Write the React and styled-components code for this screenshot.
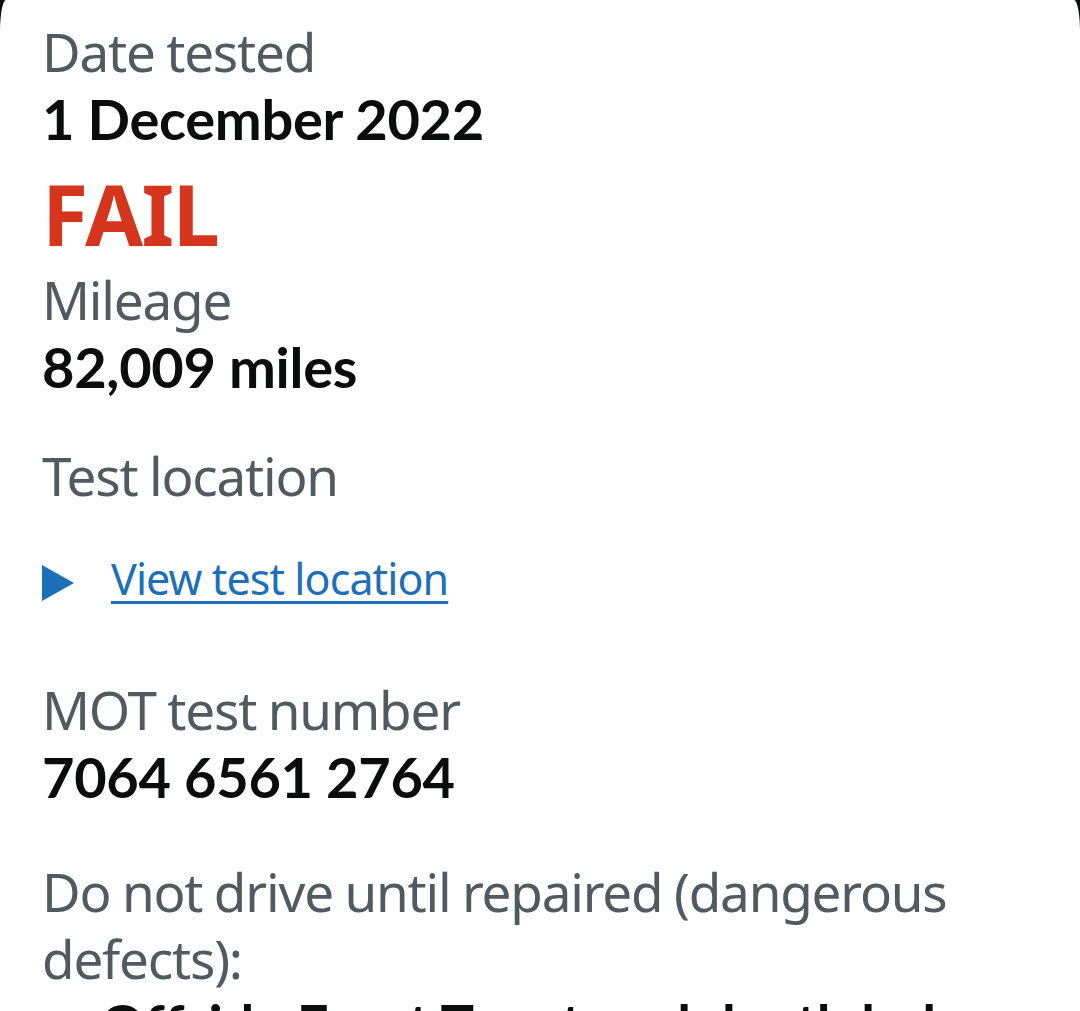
import React from "react";
import styled, { createGlobalStyle } from "styled-components";

const Global = createGlobalStyle`
  html, body { margin: 0; padding: 0; background: #0b0c0c; }
  body { font-family: "Noto Sans", "Liberation Sans", sans-serif; }
`;

const Card = styled.main`
  background: #ffffff;
  border-radius: 6px 6px 0 0 / 32px 32px 0 0;
  min-height: 1011px;
  padding: 18px 42px 0 42px;
  box-sizing: border-box;
  overflow: hidden;
`;

const Label = styled.p`
  margin: ${(p) => p.$top || 0}px 0 0 0;
  font-size: 53px;
  line-height: 67px;
  color: #505a5f;
  letter-spacing: -1.2px;
  word-spacing: -1px;
`;

const Value = styled.p`
  margin: 0;
  font-family: Lato, "Noto Sans", sans-serif;
  font-size: 56px;
  line-height: 67px;
  font-weight: 700;
  color: #0b0c0c;
  letter-spacing: -0.3px;
`;

const Result = styled.p`
  margin: 17px 0 0 0;
  font-size: 84px;
  line-height: 90px;
  font-weight: 700;
  color: #d4351c;
  letter-spacing: -1.5px;
`;

const Details = styled.div`
  margin-top: 42px;
  display: flex;
  align-items: center;
  gap: 37px;
  height: 55px;
`;

const Arrow = styled.span`
  flex: none;
  width: 0;
  height: 0;
  border-top: 18px solid transparent;
  border-bottom: 18px solid transparent;
  border-left: 32px solid #1d70b8;
  margin-top: 8px;
`;

const Link = styled.a`
  font-size: 43px;
  line-height: 55px;
  color: #1d70b8;
  text-decoration: underline;
  text-decoration-thickness: 3px;
  text-underline-offset: 6px;
  letter-spacing: -0.9px;
`;

const List = styled.ul`
  margin: -2px 0 0 0;
  padding-left: 58px;
`;

const Item = styled.li`
  font-family: Lato, "Noto Sans", sans-serif;
  font-size: 56px;
  line-height: 67px;
  font-weight: 700;
  color: #0b0c0c;
  letter-spacing: -0.3px;
`;

export default function App() {
  return (
    <>
      <Global />
      <Card>
        <Label>Date tested</Label>
        <Value>1 December 2022</Value>
        <Result>FAIL</Result>
        <Label $top={7}>Mileage</Label>
        <Value>82,009 miles</Value>
        <Label $top={42}>Test location</Label>
        <Details>
          <Arrow />
          <Link href="#">View test location</Link>
        </Details>
        <Label $top={70}>MOT test number</Label>
        <Value>7064 6561 2764</Value>
        <Label $top={48}>Do not drive until repaired (dangerous defects):</Label>
        <List>
          <Item>Offside Front Tyre tread depth below requirements of 1.6mm (5.2.3 (e))</Item>
        </List>
      </Card>
    </>
  );
}
